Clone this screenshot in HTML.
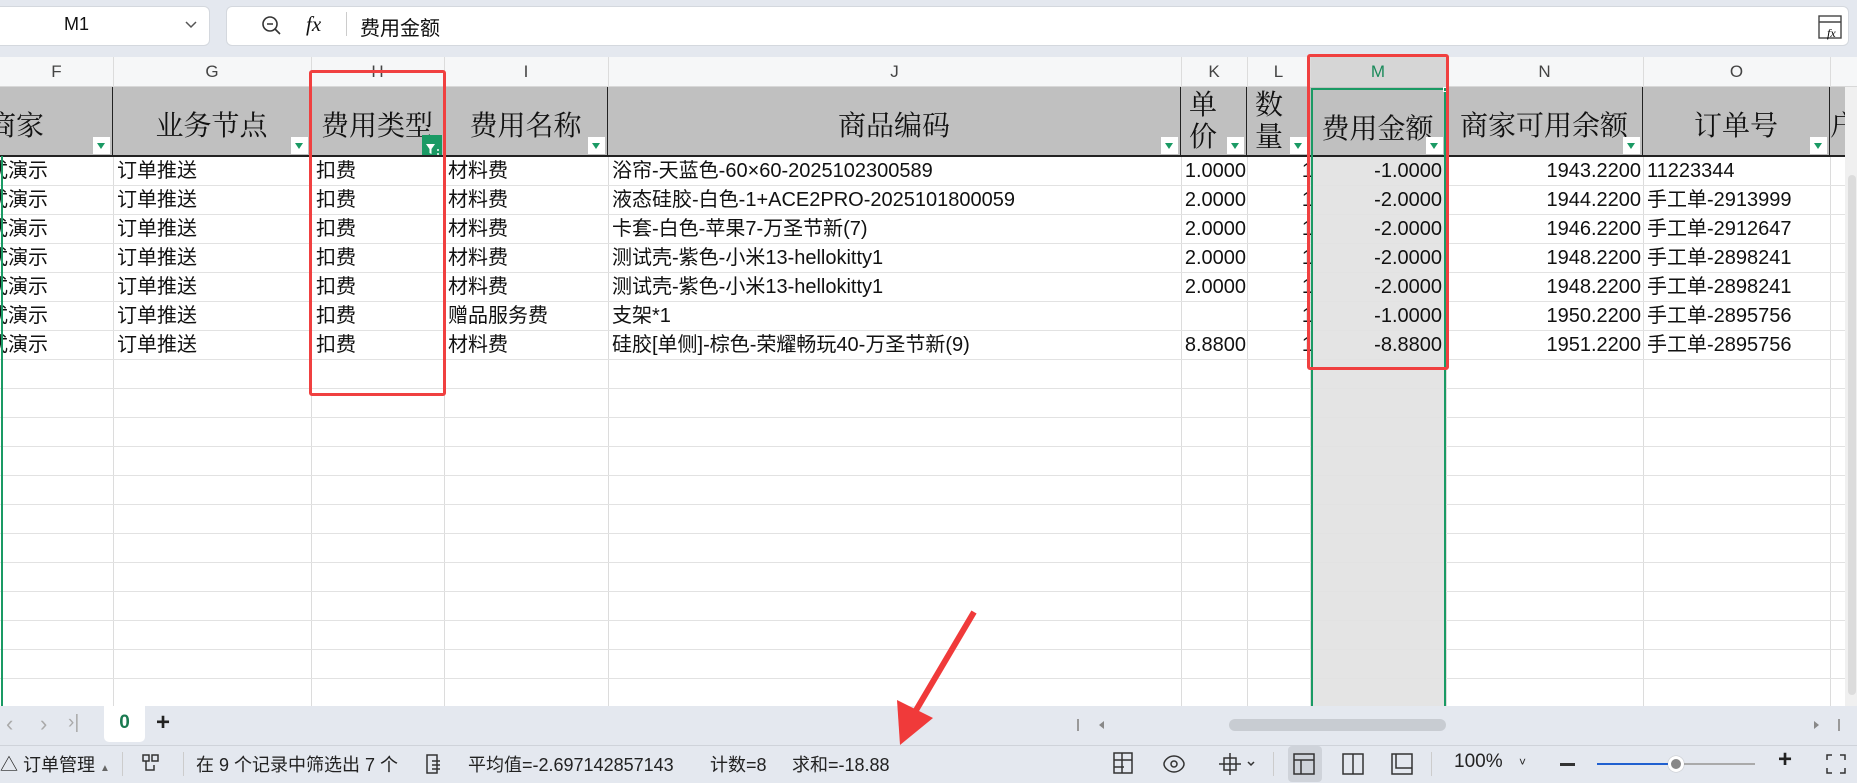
<!DOCTYPE html>
<html><head><meta charset="utf-8"><style>
*{margin:0;padding:0;box-sizing:border-box}
body{width:1857px;height:783px;overflow:hidden;background:#fff;position:relative;font-family:"Liberation Sans","Noto Sans CJK SC",sans-serif;color:#111}
.a{position:absolute}
.top{left:0;top:0;width:1857px;height:57px;background:#e4e8ef}
.box{background:#fff;border:1px solid #d4d8de;border-radius:6px}
.ch{top:57px;height:30px;background:#f6f7f8;border-bottom:1px solid #d8d8d8}
.cl{position:absolute;top:57px;height:30px;line-height:30px;text-align:center;font-size:17px;color:#444}
.vl{position:absolute;width:1px;background:#dcdcdc}
.hl{position:absolute;left:0;width:1845px;height:1px;background:#e2e2e2}
.hd{position:absolute;top:87px;height:69px;background:#c0c0c0;border-right:1px solid #222;font-family:"Liberation Serif","Noto Serif CJK SC",serif;font-size:28px;display:flex;align-items:center;justify-content:center;color:#111;padding-top:4px}
.fb{position:absolute;width:17px;height:17px;background:#fff;bottom:2px;right:2px}
.fb:after{content:"";position:absolute;left:4px;top:6px;border-left:4px solid transparent;border-right:4px solid transparent;border-top:6px solid #1a9a64}
.c{position:absolute;height:203px;line-height:29px;font-size:20px;white-space:pre;overflow:hidden}
.r{text-align:right}
.sb{font-size:17px;color:#222;position:absolute;top:751px}
</style></head><body>
<div class="a top"></div>
<div class="a box" style="left:-6px;top:6px;width:216px;height:40px"></div>
<div class="a" style="left:64px;top:14px;font-size:18px">M1</div>
<svg class="a" style="left:184px;top:18px" width="14" height="14"><path d="M2 4 L7 9 L12 4" stroke="#555" fill="none" stroke-width="1.5"/></svg>
<div class="a box" style="left:226px;top:6px;width:1623px;height:40px"></div>
<svg class="a" style="left:260px;top:14px" width="24" height="24"><circle cx="10" cy="10" r="7" stroke="#333" fill="none" stroke-width="1.6"/><path d="M7 10h6M15 15l5 5" stroke="#333" stroke-width="1.6"/></svg>
<div class="a" style="left:306px;top:12px;font-family:'Liberation Serif',serif;font-style:italic;font-size:21px">fx</div>
<div class="a" style="left:346px;top:12px;width:1px;height:24px;background:#ccc"></div>
<div class="a" style="left:360px;top:12px;font-size:20px">费用金额</div>
<svg class="a" style="left:1818px;top:15px" width="26" height="26"><rect x="1" y="1" width="22" height="22" fill="none" stroke="#444" stroke-width="1.4"/><path d="M1 7h22" stroke="#444" stroke-width="1.4"/><text x="9" y="22" font-size="12" font-style="italic" font-family="Liberation Serif">fx</text></svg>

<div class="a ch" style="left:0;width:1857px"></div>
<div class="a" style="left:1310px;top:57px;width:136px;height:30px;background:#d6d6d6"></div>
<div class="cl" style="left:0;width:113px">F</div>
<div class="cl" style="left:113px;width:198px">G</div>
<div class="cl" style="left:311px;width:133px">H</div>
<div class="cl" style="left:444px;width:164px">I</div>
<div class="cl" style="left:608px;width:573px">J</div>
<div class="cl" style="left:1181px;width:66px">K</div>
<div class="cl" style="left:1247px;width:63px">L</div>
<div class="cl" style="left:1310px;width:136px;color:#1a8a5a">M</div>
<div class="cl" style="left:1446px;width:197px">N</div>
<div class="cl" style="left:1643px;width:187px">O</div>

<div class="a" style="left:1310px;top:156px;width:136px;height:550px;background:#e4e4e4"></div>
<div class="vl" style="left:113px;top:57px;height:649px"></div>
<div class="vl" style="left:311px;top:57px;height:649px"></div>
<div class="vl" style="left:444px;top:57px;height:649px"></div>
<div class="vl" style="left:608px;top:57px;height:649px"></div>
<div class="vl" style="left:1181px;top:57px;height:649px"></div>
<div class="vl" style="left:1247px;top:57px;height:649px"></div>
<div class="vl" style="left:1310px;top:57px;height:649px"></div>
<div class="vl" style="left:1446px;top:57px;height:649px"></div>
<div class="vl" style="left:1643px;top:57px;height:649px"></div>
<div class="vl" style="left:1830px;top:57px;height:649px"></div>
<div class="hl" style="top:185px"></div><div class="hl" style="top:214px"></div><div class="hl" style="top:243px"></div><div class="hl" style="top:272px"></div><div class="hl" style="top:301px"></div><div class="hl" style="top:330px"></div><div class="hl" style="top:359px"></div><div class="hl" style="top:388px"></div><div class="hl" style="top:417px"></div><div class="hl" style="top:446px"></div><div class="hl" style="top:475px"></div><div class="hl" style="top:504px"></div><div class="hl" style="top:533px"></div><div class="hl" style="top:562px"></div><div class="hl" style="top:591px"></div><div class="hl" style="top:620px"></div><div class="hl" style="top:649px"></div><div class="hl" style="top:678px"></div>

<div class="hd" style="left:0;width:113px;justify-content:flex-start;overflow:hidden"><span style="margin-left:-12px">商家</span><div class="fb"></div></div>
<div class="hd" style="left:113px;width:198px">业务节点<div class="fb"></div></div>
<div class="hd" style="left:311px;width:133px">费用类型<div class="a" style="right:1px;bottom:1px;width:20px;height:20px;background:#1a9a64"><svg width="20" height="20"><path d="M4 5h9l-3.5 5v5l-2-1v-4z" fill="#fff"/><path d="M15 11h2M15 15h2" stroke="#fff" stroke-width="1.5"/></svg></div></div>
<div class="hd" style="left:444px;width:164px">费用名称<div class="fb"></div></div>
<div class="hd" style="left:608px;width:573px">商品编码<div class="fb"></div></div>
<div class="hd" style="left:1181px;width:66px;flex-direction:column;line-height:32px;align-items:flex-start;padding-left:8px;padding-top:0">单<br>价<div class="fb"></div></div>
<div class="hd" style="left:1247px;width:63px;flex-direction:column;line-height:32px;align-items:flex-start;padding-left:8px;padding-top:0">数<br>量<div class="fb"></div></div>
<div class="hd" style="left:1310px;width:136px;padding-top:10px">费用金额<div class="fb"></div></div>
<div class="hd" style="left:1446px;width:197px">商家可用余额<div class="fb"></div></div>
<div class="hd" style="left:1643px;width:187px">订单号<div class="fb"></div></div>
<div class="hd" style="left:1830px;width:15px;border:none;justify-content:flex-start;overflow:hidden">户</div>
<div class="a" style="left:0;top:155px;width:1845px;height:2px;background:#222"></div>

<div class="c" style="left:-12px;top:157px;width:125px">式演示
式演示
式演示
式演示
式演示
式演示
式演示</div>
<div class="c" style="left:117px;top:157px">订单推送
订单推送
订单推送
订单推送
订单推送
订单推送
订单推送</div>
<div class="c" style="left:316px;top:157px">扣费
扣费
扣费
扣费
扣费
扣费
扣费</div>
<div class="c" style="left:448px;top:157px">材料费
材料费
材料费
材料费
材料费
赠品服务费
材料费</div>
<div class="c" style="left:612px;top:157px;width:565px">浴帘-天蓝色-60×60-2025102300589
液态硅胶-白色-1+ACE2PRO-2025101800059
卡套-白色-苹果7-万圣节新(7)
测试壳-紫色-小米13-hellokitty1
测试壳-紫色-小米13-hellokitty1
支架*1
硅胶[单侧]-棕色-荣耀畅玩40-万圣节新(9)</div>
<div class="c r" style="left:1181px;top:157px;width:65px">1.0000
2.0000
2.0000
2.0000
2.0000

8.8800</div>
<div class="c r" style="left:1247px;top:157px;width:66px">1
1
1
1
1
1
1</div>
<div class="c r" style="left:1310px;top:157px;width:132px">-1.0000
-2.0000
-2.0000
-2.0000
-2.0000
-1.0000
-8.8800</div>
<div class="c r" style="left:1446px;top:157px;width:195px">1943.2200
1944.2200
1946.2200
1948.2200
1948.2200
1950.2200
1951.2200</div>
<div class="c" style="left:1647px;top:157px;width:180px">11223344
手工单-2913999
手工单-2912647
手工单-2898241
手工单-2898241
手工单-2895756
手工单-2895756</div>

<div class="a" style="left:1311px;top:88px;width:135px;height:620px;border:2px solid #1a9a64;border-bottom:none"></div>
<div class="a" style="left:1443px;top:87px;width:5px;height:5px;background:#1a9a64;border:1px solid #fff"></div>
<div class="a" style="left:1px;top:156px;width:2px;height:550px;background:#1a9a64"></div>
<div class="a" style="left:309px;top:70px;width:137px;height:326px;border:3px solid #f04040;border-radius:3px"></div>
<div class="a" style="left:1307px;top:54px;width:142px;height:316px;border:3px solid #f04040;border-radius:3px"></div>

<div class="a" style="left:1845px;top:87px;width:12px;height:619px;background:#f0f0f0"></div>
<div class="a" style="left:1848px;top:175px;width:8px;height:520px;background:#dcdcdc;border-radius:4px"></div>

<div class="a" style="left:0;top:706px;width:1857px;height:39px;background:#e4e8ef"></div>
<div class="a" style="left:6px;top:711px;font-size:22px;color:#aaa">‹</div>
<div class="a" style="left:40px;top:711px;font-size:22px;color:#aaa">›</div>
<div class="a" style="left:68px;top:712px;font-size:19px;color:#aaa">›|</div>
<div class="a" style="left:104px;top:706px;width:41px;height:36px;background:#fff;border-radius:0 0 5px 5px;text-align:center;font-size:19px;line-height:34px;color:#1a7a50;font-weight:bold">0</div>
<div class="a" style="left:156px;top:709px;font-size:24px;font-weight:bold;color:#222">+</div>
<div class="a" style="left:1077px;top:719px;width:2px;height:12px;background:#999"></div>
<div class="a" style="left:1099px;top:721px;border-top:4px solid transparent;border-bottom:4px solid transparent;border-right:5px solid #888"></div>
<div class="a" style="left:1229px;top:719px;width:217px;height:12px;background:#c8ccd2;border-radius:6px"></div>
<div class="a" style="left:1814px;top:721px;border-top:4px solid transparent;border-bottom:4px solid transparent;border-left:5px solid #888"></div>
<div class="a" style="left:1838px;top:719px;width:2px;height:12px;background:#999"></div>

<div class="a" style="left:0;top:745px;width:1857px;height:38px;background:#e4e8ef;border-top:1px solid #cfd3da"></div>
<div class="sb" style="left:0;font-size:18px">△ 订单管理 <span style="font-size:10px;color:#666">▲</span></div>
<div class="a" style="left:122px;top:752px;width:1px;height:24px;background:#ccc"></div>
<svg class="a" style="left:140px;top:752px" width="22" height="22" fill="none" stroke="#333" stroke-width="1.5"><path d="M3 3h6v6H3zM12 3h6v6h-6zM6 9v9h8v-5"/></svg>
<div class="a" style="left:183px;top:752px;width:1px;height:24px;background:#ccc"></div>
<div class="sb" style="left:196px;font-size:18px">在 9 个记录中筛选出 7 个</div>
<svg class="a" style="left:424px;top:753px" width="20" height="22"><path d="M3 2h10v18H3z M8 8h8M8 12h8M8 16h8" stroke="#333" fill="none" stroke-width="1.5"/></svg>
<div class="sb" style="left:468px;font-size:18px">平均值=-2.697142857143</div>
<div class="sb" style="left:710px;font-size:18px">计数=8</div>
<div class="sb" style="left:792px;font-size:18px">求和=-18.88</div>
<svg class="a" style="left:1112px;top:750px" width="150" height="28" fill="none" stroke="#333" stroke-width="1.5"><rect x="2" y="3" width="18" height="20"/><path d="M2 10h18M2 17h10M10 3v20"/><path d="M62 6c-6 0-10 5-10 8s4 8 10 8 10-5 10-8-4-8-10-8z"/><circle cx="62" cy="14" r="3"/><rect x="112" y="8" width="12" height="12"/><path d="M118 3v22M107 14h22"/><path d="M136 12l3 3 3-3"/></svg>
<div class="a" style="left:1288px;top:746px;width:34px;height:36px;background:#cfd3da;border-radius:4px"></div>
<svg class="a" style="left:1290px;top:752px" width="130" height="24" fill="none" stroke="#333" stroke-width="1.5"><rect x="4" y="2" width="20" height="20"/><path d="M4 8h20M11 8v14"/><rect x="53" y="2" width="20" height="20"/><path d="M63 2v20"/><rect x="102" y="2" width="20" height="20"/><path d="M106 2v14h16"/></svg>
<div class="a" style="left:1273px;top:752px;width:1px;height:24px;background:#ccc"></div>
<div class="a" style="left:1431px;top:752px;width:1px;height:24px;background:#ccc"></div>
<div class="sb" style="left:1454px;font-size:19px">100%</div>
<div class="sb" style="left:1519px;font-size:12px;top:755px">˅</div>
<div class="a" style="left:1560px;top:763px;width:15px;height:3px;background:#333"></div>
<div class="a" style="left:1597px;top:763px;width:80px;height:2px;background:#2060d0"></div>
<div class="a" style="left:1677px;top:763px;width:78px;height:2px;background:#aaa"></div>
<div class="a" style="left:1668px;top:756px;width:16px;height:16px;background:#888;border:3px solid #fff;border-radius:50%;box-shadow:0 0 1px #888"></div>
<div class="sb" style="left:1778px;font-size:24px;top:746px;font-weight:bold">+</div>
<svg class="a" style="left:1825px;top:753px" width="22" height="22" fill="none" stroke="#333" stroke-width="1.5"><path d="M2 7V2h5M15 2h5v5M20 15v5h-5M7 20H2v-5"/></svg>

<svg class="a" style="left:0;top:0" width="1857" height="783"><path d="M974 612 L915 712" stroke="#f03a3a" stroke-width="6"/><path d="M900 745 L897 700 L933 718 Z" fill="#f03a3a"/></svg>
</body></html>
